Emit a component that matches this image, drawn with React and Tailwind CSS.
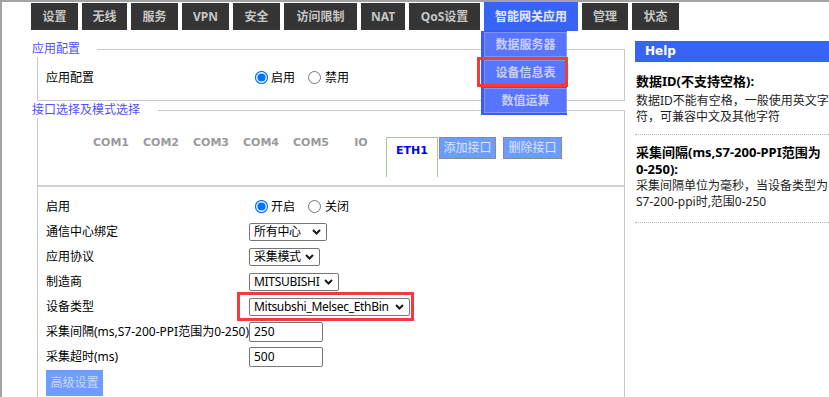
import React from "react";

const tabs = [
  { t: "设置", w: "w-[47px]" },
  { t: "无线", w: "w-[45px]" },
  { t: "服务", w: "w-[47px]" },
  { t: "VPN", w: "w-[47px]" },
  { t: "安全", w: "w-[47px]" },
  { t: "访问限制", w: "w-[73px]" },
  { t: "NAT", w: "w-[44px]" },
  { t: "QoS设置", w: "w-[71px]" },
  { t: "智能网关应用", w: "w-[94px]", active: true },
  { t: "管理", w: "w-[46px]" },
  { t: "状态", w: "w-[47px]" },
];

function Radio({ checked }) {
  return (
    <svg width="13" height="13" viewBox="0 0 13 13" className="shrink-0">
      {checked ? (
        <>
          <circle cx="6.5" cy="6.5" r="6" fill="white" stroke="#0075ff" strokeWidth="1.2" />
          <circle cx="6.5" cy="6.5" r="4.1" fill="#0075ff" />
        </>
      ) : (
        <circle cx="6.5" cy="6.5" r="6" fill="white" stroke="#767676" strokeWidth="1" />
      )}
    </svg>
  );
}

function RadioPair({ a, b }) {
  return (
    <div className="flex items-center">
      <span className="ml-[6px] flex"><Radio checked /></span>
      <span className="ml-[3px] leading-[14px]">{a}</span>
      <span className="ml-[13px] flex"><Radio /></span>
      <span className="ml-[4px] leading-[14px]">{b}</span>
    </div>
  );
}

function Select({ w, text }) {
  return (
    <div className={"flex h-[18px] items-center justify-between rounded-[2px] border border-[#767676] bg-white pl-[4px] pr-[5px] " + w}>
      <span className="whitespace-nowrap leading-[14px] tracking-[-0.3px]">{text}</span>
      <svg width="9" height="6" viewBox="0 0 9 6" className="shrink-0">
        <path d="M1 1 L4.5 4.5 L8 1" stroke="#1a1a1a" strokeWidth="2" fill="none" />
      </svg>
    </div>
  );
}

function Input({ value }) {
  return (
    <div className="flex h-[20px] w-[74px] items-center rounded-[2px] border border-[#767676] bg-white pl-[4px] leading-[14px]">
      {value}
    </div>
  );
}

function Row({ label, children }) {
  return (
    <div className="flex h-[25px] items-center">
      <div className="w-[203px] whitespace-nowrap leading-[14px]">{label}</div>
      <div className="flex items-center">{children}</div>
    </div>
  );
}

export default function App() {
  return (
    <div className="relative h-[397px] w-[829px] overflow-hidden border-l-2 border-t-2 border-[#a3a3a3] bg-white font-['Noto_Sans','Noto_Sans_CJK_SC',sans-serif] text-[12px] text-black">
      {/* Top nav */}
      <nav className="relative z-10 flex h-[29px] items-center gap-[4px] pl-[29px]">
        {tabs.map((tab) =>
          tab.active ? (
            <div
              key={tab.t}
              className={"relative flex h-[29px] items-center justify-center bg-[#3864f6] font-bold text-[#e6eaff] " + tab.w}
            >
              {tab.t}
              <div className="absolute left-[-3px] top-full flex w-[86px] flex-col gap-[3px] bg-[#3a5cf5] pb-[2px] pl-[3px] pt-[1px]">
                <div className="flex h-[25px] items-center justify-center border border-[#8093ff] bg-[#5875ff] font-bold text-[#c9cff6]">
                  数据服务器
                </div>
                <div className="relative flex h-[25px] items-center justify-center border border-[#8093ff] bg-[#5875ff] font-bold text-[#c9cff6]">
                  设备信息表
                  <div className="absolute left-[-8px] top-[-4px] h-[30px] w-[91px] border-[3px] border-[#f63a3a]" />
                </div>
                <div className="flex h-[25px] items-center justify-center border border-[#8093ff] bg-[#5875ff] font-bold text-[#c9cff6]">
                  数值运算
                </div>
              </div>
            </div>
          ) : (
            <div
              key={tab.t}
              className={"flex h-[27px] items-center justify-center bg-[#353535] font-bold text-[#c6c6c6] " + tab.w}
            >
              {tab.t}
            </div>
          )
        )}
      </nav>

      <div className="flex">
        {/* Main column */}
        <main className="pl-[35px]">
          {/* Fieldset 1 */}
          <div className="relative mt-[18px] w-[588px] border border-[#cacaca] pb-[10px] pl-[8px] pt-[15px]">
            <span className="absolute left-[-6px] top-[-9px] bg-white pr-[17px] leading-[16px] text-[#4f4fff]">
              应用配置
            </span>
            <Row label="应用配置">
              <RadioPair a="启用" b="禁用" />
            </Row>
          </div>

          {/* Fieldset 2 */}
          <div className="relative mt-[9px] h-[300px] w-[588px] border-l border-r border-t border-[#cacaca] pt-[26px]">
            <span className="absolute left-[-6px] top-[-9px] bg-white pr-[18px] leading-[16px] text-[#4f4fff]">
              接口选择及模式选择
            </span>
            <div className="flex items-start pl-[48px] font-['DejaVu_Sans',sans-serif] text-[11px] font-bold">
              {["COM1", "COM2", "COM3", "COM4", "COM5", "IO"].map((c) => (
                <div key={c} className="w-[50px] text-center leading-[12px] text-[#9a9a9a]">
                  {c}
                </div>
              ))}
              <div className="h-[40px] w-[52px] border-l border-r border-t border-[#a6c79a] pt-[7px] text-center leading-[12px] text-[#0000ff]">
                ETH1
              </div>
              <div className="ml-[1px] flex h-[22px] w-[57px] items-center justify-center border border-[#8a8a8a] bg-[#6b9cff] font-['Noto_Sans','Noto_Sans_CJK_SC',sans-serif] text-[12px] font-normal text-[#dfe5f3]">
                添加接口
              </div>
              <div className="ml-[7px] flex h-[22px] w-[59px] items-center justify-center border border-[#8a8a8a] bg-[#6b9cff] font-['Noto_Sans','Noto_Sans_CJK_SC',sans-serif] text-[12px] font-normal text-[#dfe5f3]">
                删除接口
              </div>
            </div>

            <div className="mt-[8px] border-t-2 border-[#d2d2d2] pl-[8px] pt-[7px]">
              <Row label="启用">
                <RadioPair a="开启" b="关闭" />
              </Row>
              <Row label="通信中心绑定">
                <Select w="w-[78px]" text="所有中心" />
              </Row>
              <Row label="应用协议">
                <Select w="w-[71px]" text="采集模式" />
              </Row>
              <Row label="制造商">
                <Select w="w-[90px]" text="MITSUBISHI" />
              </Row>
              <Row label="设备类型">
                <div className="relative">
                  <Select w="w-[161px]" text="Mitsubshi_Melsec_EthBin" />
                  <div className="absolute left-[-12px] top-[-6px] h-[29px] w-[177px] border-[3px] border-[#f63a3a]" />
                </div>
              </Row>
              <Row label="采集间隔(ms,S7-200-PPI范围为0-250)">
                <Input value="250" />
              </Row>
              <Row label="采集超时(ms)">
                <Input value="500" />
              </Row>
              <div className="mt-[1px] flex h-[26px] w-[57px] items-center justify-center bg-[#6e9dff] text-[#cfd8ee]">
                高级设置
              </div>
            </div>
          </div>
        </main>

        {/* Help column */}
        <aside className="ml-[10px] mt-[10px] w-[194px] text-[#1e1e1e]">
          <div className="h-[21px] bg-[#3864f6] pl-[10px] font-['DejaVu_Sans',sans-serif] text-[12px] font-bold leading-[21px] text-white">
            Help
          </div>
          <div className="pl-[1px]">
            <p className="mt-[11px] whitespace-nowrap text-[13px] font-bold leading-[16px] text-black">
              数据ID(不支持空格):
            </p>
            <p className="mt-[4px] whitespace-nowrap leading-[16px]">
              数据ID不能有空格，一般使用英文字
              <br />
              符，可兼容中文及其他字符
            </p>
          </div>
          <div className="mt-[9px] border-t border-dotted border-[#b8b8b8]" />
          <div className="pl-[1px]">
            <p className="mt-[9px] whitespace-nowrap text-[13px] font-bold leading-[17px] text-black">
              采集间隔(ms,S7-200-PPI范围为
              <br />
              0-250):
            </p>
            <p className="whitespace-nowrap leading-[16px]">
              采集间隔单位为毫秒，当设备类型为
              <br />
              S7-200-ppi时,范围0-250
            </p>
          </div>
          <div className="mt-[12px] border-t border-dotted border-[#b8b8b8]" />
        </aside>
      </div>
    </div>
  );
}
